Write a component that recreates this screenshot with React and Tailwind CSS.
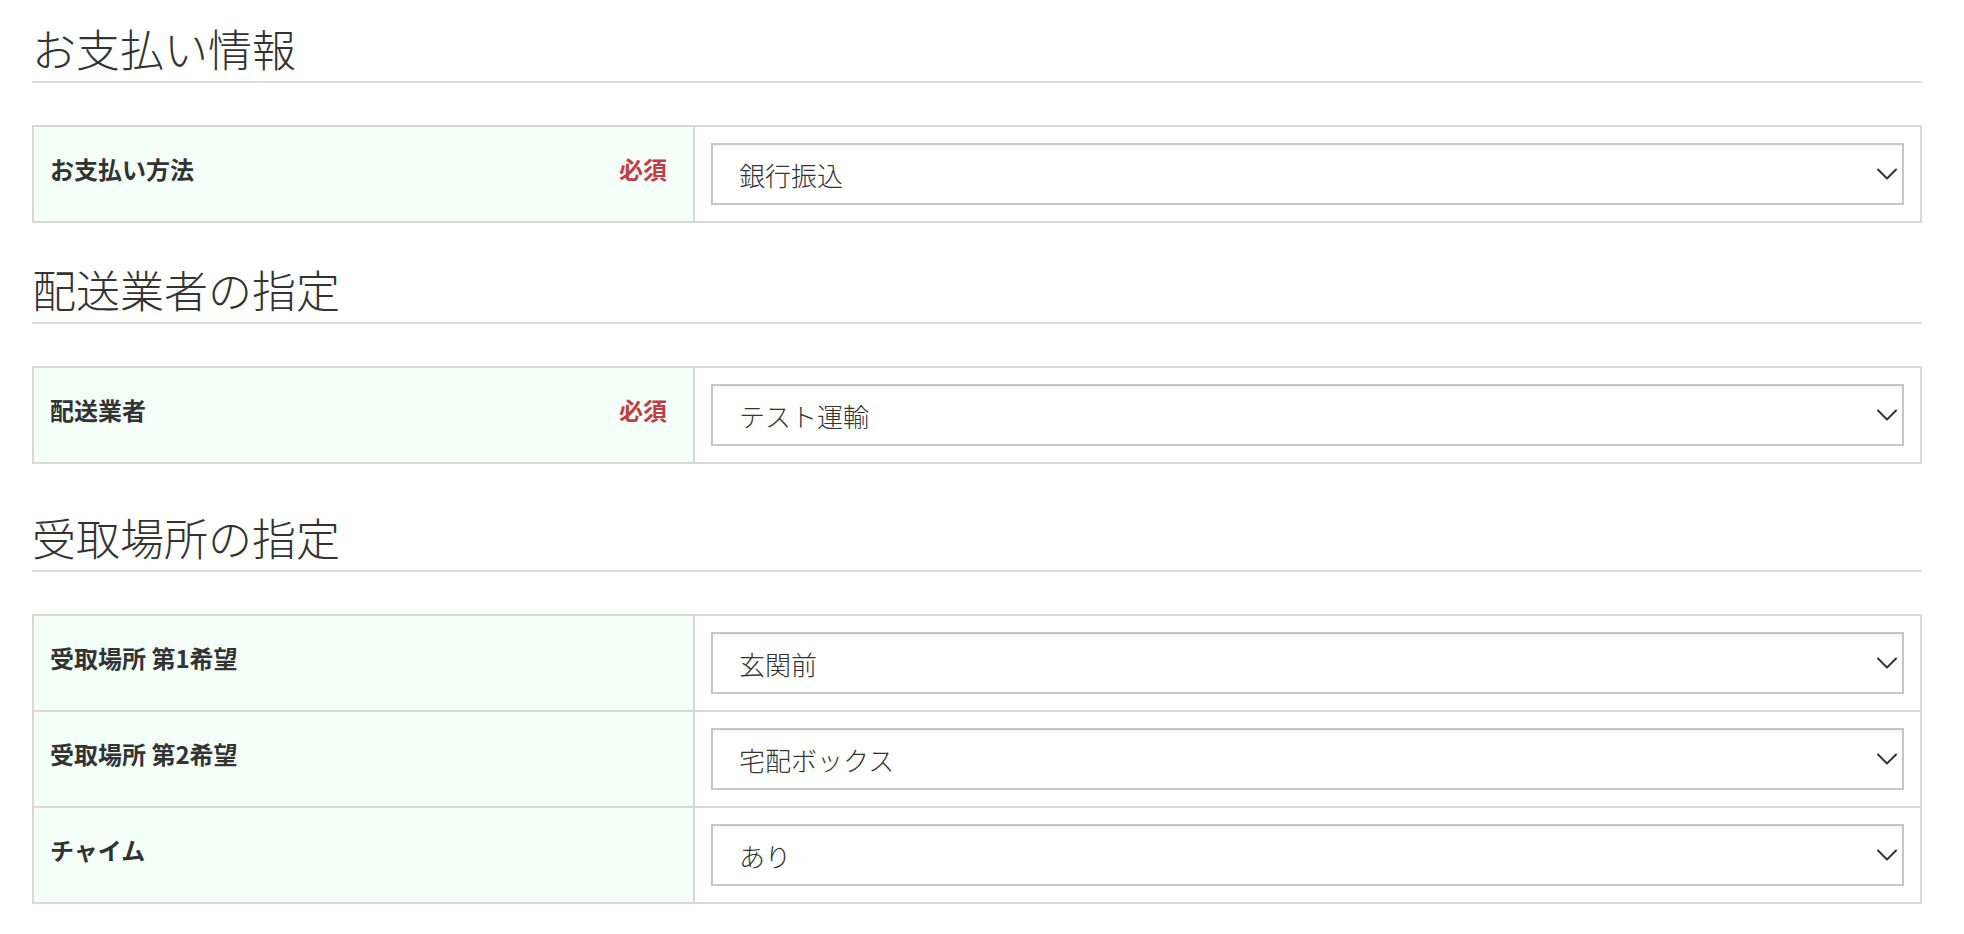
import { useState } from 'react';

const sections = [
  {
    title: 'お支払い情報',
    spacing: '',
    rows: [
      { label: 'お支払い方法', required: true, value: '銀行振込', options: ['銀行振込', 'クレジットカード', '代金引換'] },
    ],
  },
  {
    title: '配送業者の指定',
    spacing: 'mt-[18px]',
    rows: [
      { label: '配送業者', required: true, value: 'テスト運輸', options: ['テスト運輸', 'サンプル便'] },
    ],
  },
  {
    title: '受取場所の指定',
    spacing: 'mt-[25px]',
    rows: [
      { label: '受取場所 第1希望', value: '玄関前', options: ['玄関前', '宅配ボックス', '車庫', '物置'] },
      { label: '受取場所 第2希望', value: '宅配ボックス', options: ['玄関前', '宅配ボックス', '車庫', '物置'] },
      { label: 'チャイム', value: 'あり', options: ['あり', 'なし'] },
    ],
  },
];

function Chevron() {
  return (
    <svg width="20" height="12" viewBox="0 0 20 12" fill="none" className="pointer-events-none absolute right-[7px] top-1/2 -translate-y-1/2">
      <path d="M1 1.5 L10 10.5 L19 1.5" stroke="#333" strokeWidth="2" strokeLinecap="round" strokeLinejoin="round" />
    </svg>
  );
}

function SelectField({ initial, options }) {
  const [value, setValue] = useState(initial);
  return (
    <div className="relative">
      <select
        value={value}
        onChange={(e) => setValue(e.target.value)}
        className="block h-[62px] w-full appearance-none border-2 border-[#c6c6c6] bg-white pl-[26px] pr-[40px] text-[26px] font-light text-[#333] shadow-[inset_0_2px_2px_rgba(0,0,0,0.04)] outline-none"
      >
        {options.map((o) => (
          <option key={o} value={o}>{o}</option>
        ))}
      </select>
      <Chevron />
    </div>
  );
}

export default function App() {
  return (
    <div className="min-h-screen bg-white pl-[32px] pr-[42px] text-[#333]" style={{ fontFamily: '"Noto Sans CJK JP", "Noto Sans", sans-serif' }}>
      {sections.map((section) => (
        <section key={section.title} className={section.spacing}>
          {/* 見出し */}
          <h2 className="border-b-2 border-[#dddddd] pt-[18px] pb-[3px] text-[44px] font-light leading-[60px] tracking-normal">
            {section.title}
          </h2>

          <div className="mt-[42px] border-2 border-[#d8d8d8]">
            {section.rows.map((row, j) => (
              <div key={row.label} className={`flex ${j > 0 ? 'border-t-2 border-[#d8d8d8]' : ''}`}>
                <div className="flex w-[661px] shrink-0 items-start justify-between border-r-2 border-[#d8d8d8] bg-[#f5fffa] pl-[16px] pr-[26px] pt-[24px]">
                  <span className="text-[24px] font-bold leading-[36px]">{row.label}</span>
                  {row.required && (
                    <span className="text-[24px] font-bold leading-[36px] text-[#c43d40]">必須</span>
                  )}
                </div>
                <div className="flex-1 px-[16px] py-[16px]">
                  <SelectField initial={row.value} options={row.options} />
                </div>
              </div>
            ))}
          </div>
        </section>
      ))}
    </div>
  );
}
